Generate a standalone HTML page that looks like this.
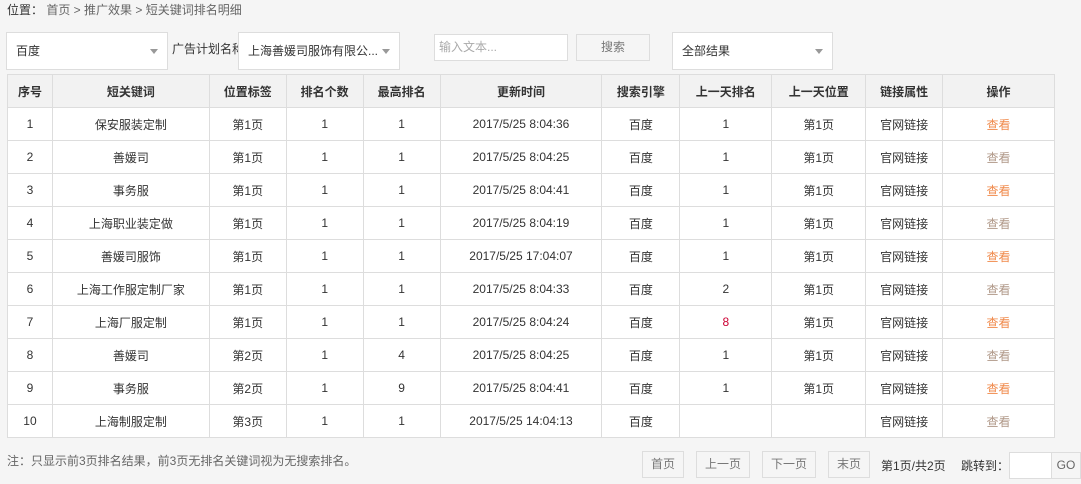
<!DOCTYPE html><html><head><meta charset="utf-8"><style>
*{margin:0;padding:0;box-sizing:border-box}
body{width:1081px;height:484px;background:#f5f5f5;font-family:"Liberation Sans","Noto Sans CJK SC",sans-serif;font-size:12px;color:#333;position:relative;overflow:hidden}
.a{position:absolute}
.crumb{left:7px;top:1px;color:#666;font-size:12px}
.crumb b{font-weight:normal;color:#333}
.sel{background:#fff;border:1px solid #ddd;height:38px;line-height:36px;padding-left:9px;font-size:12px;color:#333}
.sel:after{content:"";position:absolute;right:9px;top:16px;border:4px solid transparent;border-top:5px solid #999}
.inp{background:#fff;border:1px solid #ddd;height:27px;line-height:25px;padding-left:4px;color:#aaa}
.btn{border:1px solid #ddd;background:#f5f5f5;color:#777;text-align:center;height:27px;line-height:25px}
table{position:absolute;left:7px;top:74px;width:1048px;border-collapse:collapse;background:#fff}
td,th{border:1px solid #ddd;text-align:center;height:33px;font-size:12px;font-weight:normal;color:#333;padding:0}
th{background:#f2f2f2;font-weight:bold;height:33px}
td.l{color:#f08a4b}
.pb{border:1px solid #ddd;color:#777;text-align:center;height:27px;line-height:25px;top:451px}
</style></head><body>
<div class="a crumb"><b>位置：</b> 首页 &gt; 推广效果 &gt; 短关键词排名明细</div>
<div class="a sel" style="left:6px;top:32px;width:162px">百度</div>
<div class="a" style="left:172px;top:40px;width:66px;overflow:hidden;white-space:nowrap">广告计划名称</div>
<div class="a sel" style="left:238px;top:32px;width:162px">上海善媛司服饰有限公...</div>
<div class="a inp" style="left:434px;top:34px;width:134px">输入文本...</div>
<div class="a btn" style="left:576px;top:34px;width:74px">搜索</div>
<div class="a sel" style="left:672px;top:32px;width:161px">全部结果</div>
<table>
<colgroup><col style="width:45px"><col style="width:157px"><col style="width:77px"><col style="width:77px"><col style="width:77px"><col style="width:162px"><col style="width:78px"><col style="width:92px"><col style="width:94px"><col style="width:77px"><col style="width:112px"></colgroup>
<tr><th>序号</th><th>短关键词</th><th>位置标签</th><th>排名个数</th><th>最高排名</th><th>更新时间</th><th>搜索引擎</th><th>上一天排名</th><th>上一天位置</th><th>链接属性</th><th>操作</th></tr>
<tr><td>1</td><td>保安服装定制</td><td>第1页</td><td>1</td><td>1</td><td>2017/5/25 8:04:36</td><td>百度</td><td>1</td><td>第1页</td><td>官网链接</td><td class="l">查看</td></tr>
<tr><td>2</td><td>善媛司</td><td>第1页</td><td>1</td><td>1</td><td>2017/5/25 8:04:25</td><td>百度</td><td>1</td><td>第1页</td><td>官网链接</td><td class="l" style="color:#b09888">查看</td></tr>
<tr><td>3</td><td>事务服</td><td>第1页</td><td>1</td><td>1</td><td>2017/5/25 8:04:41</td><td>百度</td><td>1</td><td>第1页</td><td>官网链接</td><td class="l">查看</td></tr>
<tr><td>4</td><td>上海职业装定做</td><td>第1页</td><td>1</td><td>1</td><td>2017/5/25 8:04:19</td><td>百度</td><td>1</td><td>第1页</td><td>官网链接</td><td class="l" style="color:#b09888">查看</td></tr>
<tr><td>5</td><td>善媛司服饰</td><td>第1页</td><td>1</td><td>1</td><td>2017/5/25 17:04:07</td><td>百度</td><td>1</td><td>第1页</td><td>官网链接</td><td class="l">查看</td></tr>
<tr><td>6</td><td>上海工作服定制厂家</td><td>第1页</td><td>1</td><td>1</td><td>2017/5/25 8:04:33</td><td>百度</td><td>2</td><td>第1页</td><td>官网链接</td><td class="l" style="color:#b09888">查看</td></tr>
<tr><td>7</td><td>上海厂服定制</td><td>第1页</td><td>1</td><td>1</td><td>2017/5/25 8:04:24</td><td>百度</td><td style="color:#c03">8</td><td>第1页</td><td>官网链接</td><td class="l">查看</td></tr>
<tr><td>8</td><td>善媛司</td><td>第2页</td><td>1</td><td>4</td><td>2017/5/25 8:04:25</td><td>百度</td><td>1</td><td>第1页</td><td>官网链接</td><td class="l" style="color:#b09888">查看</td></tr>
<tr><td>9</td><td>事务服</td><td>第2页</td><td>1</td><td>9</td><td>2017/5/25 8:04:41</td><td>百度</td><td>1</td><td>第1页</td><td>官网链接</td><td class="l">查看</td></tr>
<tr><td>10</td><td>上海制服定制</td><td>第3页</td><td>1</td><td>1</td><td>2017/5/25 14:04:13</td><td>百度</td><td></td><td></td><td>官网链接</td><td class="l" style="color:#b09888">查看</td></tr>
</table>
<div class="a" style="left:7px;top:452px;color:#666">注：只显示前3页排名结果，前3页无排名关键词视为无搜索排名。</div>
<div class="a pb" style="left:642px;width:42px">首页</div>
<div class="a pb" style="left:696px;width:54px">上一页</div>
<div class="a pb" style="left:762px;width:54px">下一页</div>
<div class="a pb" style="left:828px;width:42px">末页</div>
<div class="a" style="left:881px;top:457px">第1页/共2页</div>
<div class="a" style="left:961px;top:457px">跳转到：</div>
<div class="a" style="left:1009px;top:452px;width:43px;height:27px;background:#fff;border:1px solid #ddd"></div>
<div class="a pb" style="left:1051px;top:452px;width:30px;color:#666">GO</div>
</body></html>
